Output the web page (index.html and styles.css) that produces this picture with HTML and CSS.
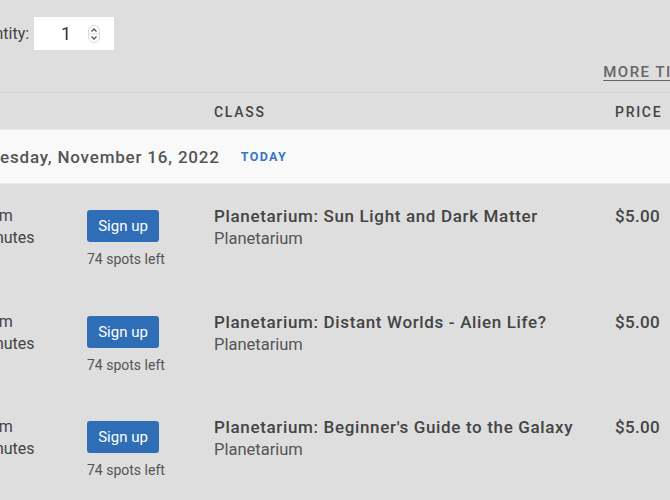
FILE: index.html
```html
<!DOCTYPE html>
<html>
<head>
<meta charset="utf-8">
<link rel="stylesheet" href="styles.css">
</head>
<body>
<div class="page">
  <div class="qty-row">
    <label class="qty-label">Quantity:</label>
    <div class="qty-box">
      <span class="qty-val">1</span>
      <span class="spinner">
        <svg width="12" height="18" viewBox="0 0 12 18">
          <rect x="0.5" y="0.5" width="11" height="17" rx="5.5" fill="#fff" stroke="#d8d8d8"/>
          <line x1="1" y1="9" x2="11" y2="9" stroke="#e4e4e4"/>
          <path d="M3.5 6.5 L6 4 L8.5 6.5" fill="none" stroke="#555" stroke-width="1.3"/>
          <path d="M3.5 11.5 L6 14 L8.5 11.5" fill="none" stroke="#555" stroke-width="1.3"/>
        </svg>
      </span>
    </div>
  </div>
  <div class="more-row"><a class="more-link">More times</a></div>
  <div class="grid head">
    <div class="h-time">Time</div>
    <div></div>
    <div class="h-class">Class</div>
    <div class="h-price">Price</div>
  </div>
  <div class="band">
    <span class="band-date">Wednesday, November 16, 2022</span>
    <span class="today">Today</span>
  </div>
  <div class="grid row">
    <div class="time"><div>1:00 pm</div><div>45 minutes</div></div>
    <div class="signup"><button class="btn">Sign up</button><div class="spots">74 spots left</div></div>
    <div class="cls"><div class="title">Planetarium: Sun Light and Dark Matter</div><div class="sub">Planetarium</div></div>
    <div class="price">$5.00</div>
  </div>
  <div class="grid row">
    <div class="time"><div>2:00 pm</div><div>45 minutes</div></div>
    <div class="signup"><button class="btn">Sign up</button><div class="spots">74 spots left</div></div>
    <div class="cls"><div class="title">Planetarium: Distant Worlds - Alien Life?</div><div class="sub">Planetarium</div></div>
    <div class="price">$5.00</div>
  </div>
  <div class="grid row">
    <div class="time"><div>3:00 pm</div><div>45 minutes</div></div>
    <div class="signup"><button class="btn">Sign up</button><div class="spots">74 spots left</div></div>
    <div class="cls"><div class="title">Planetarium: Beginner's Guide to the Galaxy</div><div class="sub">Planetarium</div></div>
    <div class="price">$5.00</div>
  </div>
</div>
</body>
</html>
```
FILE: styles.css
```css
html, body {
  margin: 0;
  padding: 0;
  background: #dedede;
  overflow: hidden;
  width: 670px;
  height: 500px;
}
body {
  font-family: Roboto, "Liberation Sans", sans-serif;
  color: #444;
}
.page {
  margin-left: -42px;
  width: 800px;
}
.qty-row {
  display: flex;
  align-items: center;
  gap: 5px;
  padding-top: 17px;
  padding-left: 8px;
  height: 33px;
}
.qty-label {
  font-size: 16px;
  color: #444;
}
.qty-box {
  width: 80px;
  height: 33px;
  background: #fff;
  display: flex;
  align-items: center;
  justify-content: flex-end;
  box-sizing: border-box;
  padding-right: 14px;
  gap: 17px;
}
.qty-val {
  font-size: 18px;
  color: #333;
}
.spinner {
  display: flex;
}
.more-row {
  display: flex;
  justify-content: flex-end;
  padding-top: 13px;
  height: 29px;
  border-bottom: 1px solid #d6d6d6;
}
.more-link {
  font-size: 15px;
  font-weight: 500;
  text-transform: uppercase;
  letter-spacing: 1.5px;
  color: #666;
  text-decoration: underline;
  text-underline-offset: 3px;
  padding-right: 51px;
}
.grid {
  display: grid;
  grid-template-columns: 129px 127px 401px 1fr;
}
.head {
  align-items: center;
  font-size: 14px;
  font-weight: 500;
  text-transform: uppercase;
  letter-spacing: 1.7px;
  color: #444;
  border-bottom: 1px solid #ececec;
  padding-top: 1px;
  box-sizing: border-box;
  height: 37px;
}
.band {
  background: #f9f9f9;
  height: 53px;
  display: flex;
  align-items: center;
  gap: 21px;
  border-bottom: 1px solid #ececec;
}
.band-date {
  font-size: 17px;
  font-weight: 500;
  letter-spacing: 0.8px;
  color: #555;
  margin-left: -4px;
}
.today {
  font-size: 12.5px;
  font-weight: 700;
  text-transform: uppercase;
  letter-spacing: 1.4px;
  color: #3a76c0;
}
.row {
  height: 105.5px;
  box-sizing: border-box;
  padding-top: 21px;
  align-items: start;
}
.time {
  font-size: 16px;
  line-height: 22px;
  color: #444;
  margin-left: -3px;
}
.signup {
  display: flex;
  flex-direction: column;
  align-items: flex-start;
  padding-top: 5px;
}
.btn {
  font-family: Roboto, "Liberation Sans", sans-serif;
  width: 72px;
  height: 32px;
  border: none;
  border-radius: 3px;
  background: #2f6eb6;
  color: #fff;
  font-size: 15px;
  padding: 0;
}
.spots {
  font-size: 14px;
  color: #555;
  margin-top: 9px;
}
.title {
  font-size: 17px;
  font-weight: 500;
  line-height: 22px;
  letter-spacing: 0.65px;
  color: #444;
}
.sub {
  font-size: 16.5px;
  line-height: 23px;
  color: #555;
}
.price {
  font-size: 17px;
  font-weight: 500;
  line-height: 22px;
  letter-spacing: 0.3px;
  color: #444;
}
```
